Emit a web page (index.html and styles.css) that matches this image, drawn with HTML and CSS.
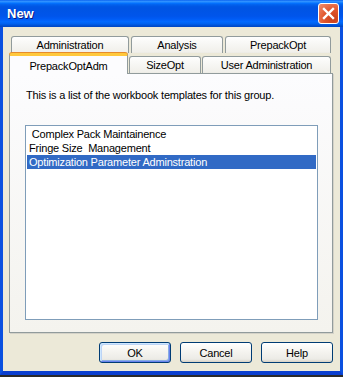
FILE: index.html
```html
<!DOCTYPE html>
<html lang="en">
<head>
  <meta charset="UTF-8">
  <meta name="viewport" content="width=device-width, initial-scale=1.0">
  <title>New</title>
  <link rel="stylesheet" href="styles.css">
</head>
<body>
  <div class="window">
    <div class="titlebar">
      <span class="title">New</span>
      <button class="close" aria-label="Close">
        <svg width="13" height="13" viewBox="0 0 13 13">
          <path d="M2 2 L11 11 M11 2 L2 11" stroke="#fff" stroke-width="2.4" stroke-linecap="square"/>
        </svg>
      </button>
    </div>
    <div class="content">
      <div class="tabs">
        <div class="tab-row back">
          <div class="tab w-admin">Administration</div>
          <div class="tab w-analysis">Analysis</div>
          <div class="tab w-prepack">PrepackOpt</div>
        </div>
        <div class="tab-row front">
          <div class="tab selected">PrepackOptAdm</div>
          <div class="tab w-size">SizeOpt</div>
          <div class="tab w-user">User Administration</div>
        </div>
      </div>
      <div class="panel">
        <p class="intro">This is a list of the workbook templates for this group.</p>
        <ul class="listbox">
          <li> Complex Pack Maintainence</li>
          <li>Fringe Size  Management</li>
          <li class="active">Optimization Parameter Adminstration</li>
        </ul>
      </div>
      <div class="actions">
        <button class="btn default">OK</button>
        <button class="btn">Cancel</button>
        <button class="btn">Help</button>
      </div>
    </div>
  </div>
</body>
</html>
```

FILE: styles.css
```css
/* reset */
*,
*::before,
*::after {
  box-sizing: border-box;
}
body {
  margin: 0;
  background: #ffffff;
  font-family: "Liberation Sans", Arial, sans-serif;
  font-size: 11px;
  letter-spacing: -0.2px;
  color: #000;
}
p,
ul {
  margin: 0;
  padding: 0;
}
button {
  font: inherit;
  letter-spacing: inherit;
}

/* window */
.window {
  width: 343px;
  height: 377px;
  display: flex;
  flex-direction: column;
  border-bottom: 2px solid #2a2a2a;
}
.titlebar {
  height: 27px;
  flex-shrink: 0;
  display: flex;
  align-items: center;
  justify-content: space-between;
  padding: 0 4px 1px 7px;
  background: linear-gradient(#0058ee 0%, #3593ff 4%, #288eff 7%, #127dff 10%, #036ffc 13%, #0262ee 17%, #0057e5 24%, #0054e3 30%, #0055eb 60%, #005bf5 70%, #026afe 80%, #0062ef 88%, #0052d6 94%, #0046c0 100%);
}
.title {
  color: #fff;
  font-weight: bold;
  font-size: 13px;
  letter-spacing: 0;
  text-shadow: 1px 1px #0a1883;
  padding-top: 1px;
}
.close {
  width: 21px;
  height: 21px;
  padding: 0;
  border: 1px solid #fff;
  border-radius: 3px;
  background: radial-gradient(circle at 75% 80%, #c8401c 0%, #e0552c 45%, #f2906f 100%);
  display: flex;
  align-items: center;
  justify-content: center;
}
.close svg {
  display: block;
}

.content {
  flex: 1;
  display: flex;
  flex-direction: column;
  background: #ece9d8;
  border: 3px solid #0a50e0;
  border-top: none;
  border-bottom: 4px solid #0b3fcf;
  padding: 9px 7px 8px 6px;
}

/* tabs */
.tabs {
  display: flex;
  flex-direction: column;
}
.tab-row {
  display: flex;
}
.tab-row.back {
  height: 17px;
  padding-left: 2px;
  gap: 2px;
}
.tab-row.front {
  height: 20px;
  align-items: flex-end;
}
.tab {
  height: 17px;
  line-height: 15px;
  padding-top: 1px;
  text-align: center;
  white-space: nowrap;
  border: 1px solid #919b9c;
  border-bottom: none;
  border-radius: 3px 3px 0 0;
  background: linear-gradient(#fefefe, #f9f9f7 30%, #f1f0eb 90%, #ecebe5);
}
.w-admin { width: 118px; }
.w-analysis { width: 92px; }
.w-prepack { width: 106px; }
.w-size { width: 72px; margin-left: 1px; }
.w-user { width: 129px; margin-left: 1px; }
.tab.selected {
  width: 119px;
  height: 21px;
  line-height: 18px;
  margin-bottom: -1px;
  position: relative;
  z-index: 1;
  border-top: 3px solid #ffc83c;
  box-shadow: 0 -1px 0 #e68b2c;
  background: #fcfcfe;
}

/* panel */
.panel {
  flex: 1;
  display: flex;
  flex-direction: column;
  padding: 15px 14px 12px 15px;
  border: 1px solid #919b9c;
  box-shadow: 1px 1px 0 #d4d2c8;
  background: linear-gradient(#fcfcfe, #f4f3ee);
}
.intro {
  line-height: 13px;
  padding-left: 1px;
}
.listbox {
  flex: 1;
  margin-top: 23px;
  list-style: none;
  padding: 1px;
  background: #fff;
  border: 1px solid #7f9db9;
}
.listbox li {
  height: 14px;
  line-height: 14px;
  padding-left: 2px;
  white-space: pre;
}
.listbox li.active {
  background: #316ac5;
  color: #fff;
}

/* buttons */
.actions {
  display: flex;
  justify-content: flex-end;
  gap: 9px;
  margin-top: 9px;
}
.btn {
  width: 72px;
  height: 21px;
  padding: 0;
  color: #000;
  border: 1px solid #003c74;
  border-radius: 3px;
  background: linear-gradient(#ffffff, #f6f5f1 40%, #ecebe6 85%, #d6d0c5);
}
.btn.default {
  box-shadow: inset 1px 1px 0 #cee7ff, inset -1px -1px 0 #6982ee, inset 2px 2px 0 #bcd4f6, inset -2px -2px 0 #89ade4;
}
```
